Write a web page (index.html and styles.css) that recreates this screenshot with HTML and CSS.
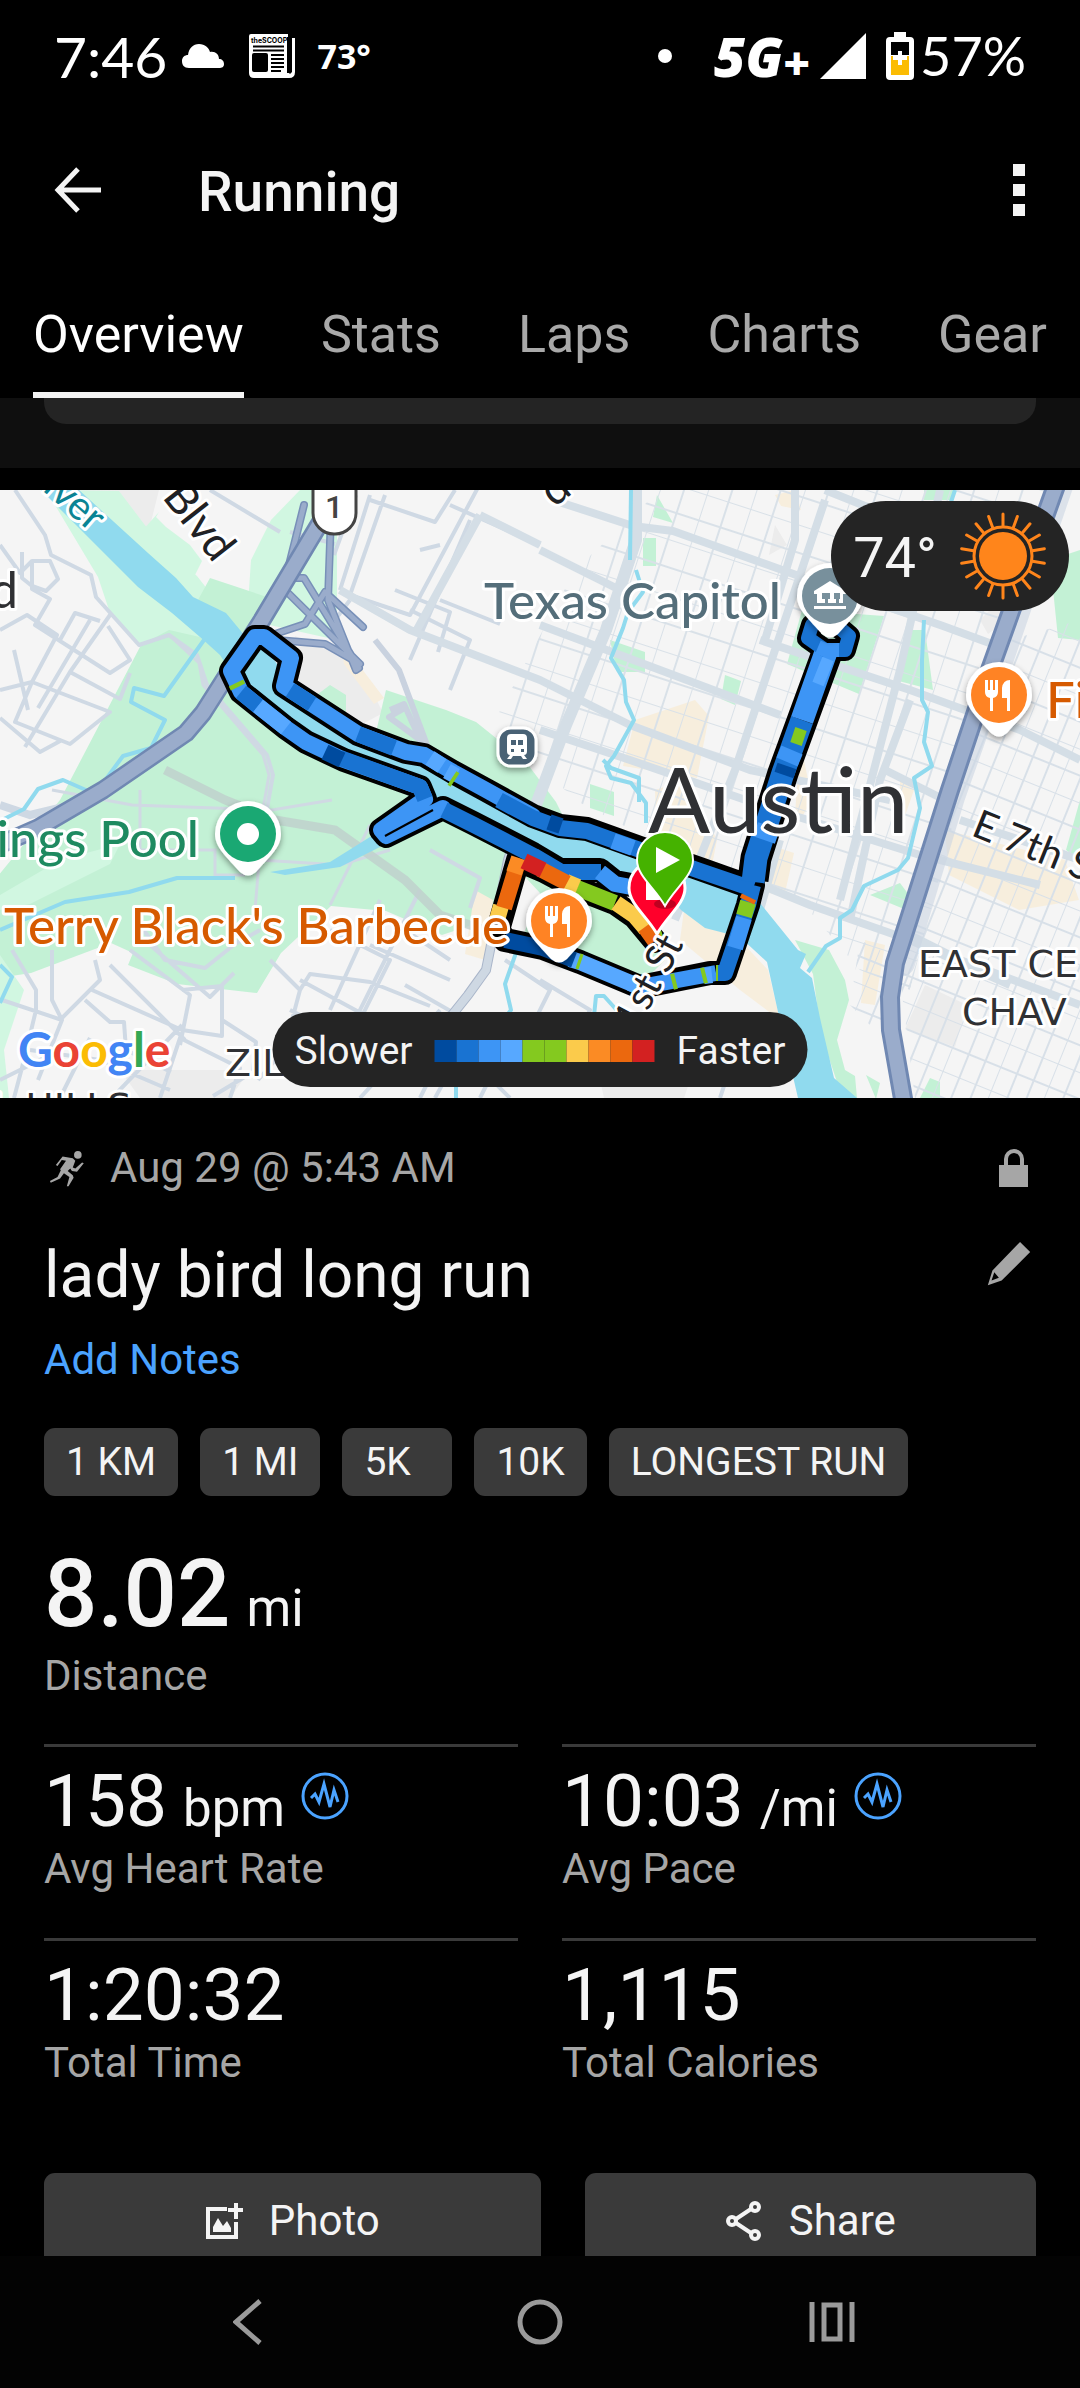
FILE: index.html
```html
<!DOCTYPE html>
<html lang="en">
<head>
<meta charset="utf-8">
<meta name="viewport" content="width=device-width, initial-scale=1">
<title>Running</title>
<link rel="stylesheet" href="styles.css">
</head>
<body>
<div class="status">
  <span class="clock">7:46</span>
  <svg class="cloud" width="44" height="26" viewBox="0 0 44 26"><path fill="#fff" d="M8 25C3 25 1 22 1 18c0-4 3-6 6-6C8 5 12 1 18 1s10 4 11 8c5-1 9 2 9 7 3 0 5 2 5 5s-2 4-5 4z"/></svg>
  <svg class="news" width="46" height="44" viewBox="0 0 46 44">
    <path fill="#fff" d="M2 0h37v38l2 2 2-2V4h3v34q0 6-6 6H5q-5 0-5-5V2q0-2 2-2z"/>
    <text class="news-title" x="2" y="9">theSCOOP</text>
    <path stroke="#000" stroke-width="2" d="M4 12.500h31M4 16.500h31M22 21h13M22 25h13M22 29h13M22 33h13M22 37h10M39 3v36"/>
    <rect x="3" y="19" width="16" height="19" rx="2"/>
  </svg>
  <span class="outside">73°</span>
  <svg class="dot" width="14" height="14" viewBox="0 0 14 14"><circle cx="7" cy="7" r="7" fill="#fff"/></svg>
  <span class="network">5G<span class="plus">+</span></span>
  <svg class="signal" width="46" height="46" viewBox="0 0 46 46"><path fill="#fff" d="M46 0v46H0z"/></svg>
  <svg class="battery" width="28" height="48" viewBox="0 0 28 48"><path fill="#fff" d="M8 0h12v5h4q4 0 4 4v35q0 4-4 4H4q-4 0-4-4V9q0-4 4-4h4z"/><path d="M5 10h18v13H5z"/><path fill="#fbbc04" d="M5 24h18v19H5z"/><path fill="#fff" d="M12 19h4v5h5v4h-5v5h-4v-5H7v-4h5z"/></svg>
  <span class="charge">57%</span>
</div>

<header class="appbar">
  <button class="icon-button" aria-label="Back"><svg width="48" height="46" viewBox="0 0 48 46" fill="none" stroke="#f4f4f4" stroke-width="5"><path d="M24 2 4 23l20 21M4 23h43"/></svg></button>
  <h1 class="heading">Running</h1>
  <button class="icon-button" aria-label="More options"><svg width="14" height="52" viewBox="0 0 14 52" fill="#f4f4f4"><path d="M1 0h12v12H1zM1 20h12v12H1zM1 40h12v12H1z"/></svg></button>
</header>

<nav class="tabs">
  <a class="tab tab-on" href="#overview">Overview</a>
  <a class="tab" href="#stats">Stats</a>
  <a class="tab" href="#laps">Laps</a>
  <a class="tab" href="#charts">Charts</a>
  <a class="tab" href="#gear">Gear</a>
</nav>

<main class="content" id="overview">
  <div class="banner"><div class="banner-card"></div></div>

  <section class="map">
    <svg class="map-art" viewBox="0 490 1080 608" preserveAspectRatio="xMidYMid slice">
      <defs>
        <pattern id="blocks" width="46" height="54" patternUnits="userSpaceOnUse" patternTransform="translate(640 700) rotate(18)"><path d="M0 0v54M23 0v54M0 0h46M0 27h46" fill="none" stroke="#d9e1e8" stroke-width="2"/></pattern>
        <pattern id="blocks-east" width="52" height="50" patternUnits="userSpaceOnUse" patternTransform="translate(940 800) rotate(22)"><path d="M0 0v50M18 0v50M36 0v50M0 0h52M0 25h52" fill="none" stroke="#d8e0e8" stroke-width="2"/></pattern>
        <filter id="lift" x="-30%" y="-30%" width="160%" height="170%"><feDropShadow dx="0" dy="3" stdDeviation="3" flood-opacity=".4"/></filter>
        <path id="pin" d="M-33 0A33 33 0 1 1 33 0C33 14 20 24 8 38Q0 45-8 38C-20 24-33 14-33 0Z"/>
        <path id="drop" d="M-28 0A28 28 0 1 1 28 0C28 16 10 28 0 46C-10 28-28 16-28 0Z"/>
        <path id="food" fill="#fff" d="M-14-15h3v10h2v-10h3v10h2v-10h3v12q0 5-5 6v13h-3V3q-5-1-5-6zM11-15v31H8V3H3V-7q1-8 8-8z"/>
      </defs>
      <rect y="490" width="1080" height="608" fill="#f5f5f5"/>
      <path fill="#ececec" d="M79 490h80l-10 40-17 25-53-56zM295 636l60 25 12 20 16 32-28 15-60-40 6-30z"/>
      <path fill="#d1f7e1" d="M46 490 98 577l12 36 31 34 28-15 58 28 14-28-44-56-40-35-38-50zM159 512l-27 30 38 36 22 3 10-20-12-16-24-18-10-10zM300 490h37v150l-90-20 4-60 20-40z"/>
      <path fill="#c3f1d5" d="M198 600l12-22 60 20-20 40zM141 645l28-15 31 7 27 23 25 40 60 50 110 40-40 45 50-20 30 10 40 20 20 40-20 30-60 20-56-24-55-5-50 47-24 40-80-9-49-19 5-12-22-10-80 30-110 17v-20L60 800zM386 690l60 20 30 12 50 40 30 40 10 20-90-30-100-60zM310 700l20-15 16 10v20zM420 835l60 35-16 12 20 10-20 30-30-30zM500 850l50 20 60 20 20 30 35 40-25 25-120-42 20-50z"/>
      <path fill="#d1f7e1" d="M0 895l60-35 60-16-10 20-80 40-30 6zM0 955l24 35-20 60 5 48H0z"/>
      <path fill="#c3f1d5" d="M802 610l82 6-25 78-72-30zM910 630h15l8 60-38-10zM610 640l35 12v20h-28zM725 675l16 6-6 24-14-6zM643 538h13v28h-13zM657 495l16 28-20-6zM1050 560l30-10v90l-22-2zM924 490h30v10h-30zM590 784l24 8v24l-24-8zM1066 850l14-50v60zM795 940l34 10 16 30 4 20-12 40 8 30 10 6 2 22-16-4-20-60-8-60zM870 895l30-12 12 16-8 10zM866 1075l14 8-4 16zM920 1098l10-20 10 4v16z"/>
      <path fill="#f7eedd" d="M635 720l60-20 14 16-12 62-74-12zM655 790l32-10 30 60-10 50-50-40zM770 845l24 8-10 44-25-7zM945 830l120 30 14 40-60 10-70-35zM865 940l20 5-10 60-14-2zM684 910l56 30 28 30 12 50-40-30-60-50zM340 640l44 58-10 6-30-40zM475 890l18 10-8 60-20-6zM800 740l12 60-18 30zM775 495l20-5 6 20-20-4zM900 780l14 10-14 40z"/>
      <path fill="#ececec" d="M925 985l42 20-12 42-50-18zM775 525l12 20-18 10zM980 620l20-20 8 20-20 14zM120 1070h130l-20 28h-90zM600 1080h90l-6 18h-80z"/>
      <path fill="url(#blocks)" d="M660 490h390l-60 190-80 310-50-20-60-70-130-50-95-50-80-80 80-150z"/>
      <path fill="url(#blocks-east)" d="M1010 640l70-20v478H915l-15-120 20-110zM860 940l30 15-10 80-30-30z"/>
      <g fill="none" stroke="#cfd9e4" stroke-width="4" stroke-linejoin="round">
        <path d="M15 490l30 45 6 20 40 20 5 22 43 48 30-10 28 20 10 30 60 70 6 20-8 45M0 545l20 28 12-12h18l8 18-12 12-14-5-10-8v-26M32 561v28l18 10-15 26 75 48 20-13-22-34M110 615 70 672l50 27 10-26M60 640l15-27 25 8M0 690l32-8 25-47-30-20-27 15M32 682l78 30-40 32-55-22zM0 718l40 34 22-12M70 672l-45 75M14 650l14 60M90 620l-52 88"/>
        <path d="M210 490l70 42M356 495l-22 60M290 532l45 12M340 590l30-95M370 500l65 22 20-32M385 495l-35 100 60 20 80-150M410 610l60 30-20 50M350 600l-15 20M420 550l20-5M450 505l90 40M470 520l-60 140M440 600l60 24M395 590l55 22-12 40"/>
        <path d="M12 950l24 40v20l-12 50-10 38M52 950v50l10 20-24 60M95 960l5 20-40 40M62 1020l-60-20M85 1000l25 22h14l2 28 45 22M110 965l75 75M130 950l60 45-10 50M150 945l60 52 12-12 12-12M182 990l40-4v50l-40-6-90-40M222 1020l34 22-3 30-40 24M182 1025l-70 73M140 925l25 35 40 8 30-24 25-14M270 960l30 30-16 60-26 30M300 990l10-16 60 8 60 24M290 1010l100 50M300 980l70 38M330 930l60 30-50 100M285 1030l80 40M380 900l-50 110M420 890l-80 160M370 945l80 35M390 920l60 40M440 1010l-80 88M405 985l70 40-40 73M30 1050l70 10 70 30M0 1080l60-30M60 1098l30-60M160 1098l20-60 60 30-10 30M430 850l50 28-10 30M500 1035l40 20M505 960l45 30-30 60M540 980l50 30-20 40"/>
        <path d="M420 1098l30-60 60 60M480 1098l20-40M720 1098l10-30"/>
      </g>
      <g fill="none" stroke="#d0d9e3" stroke-width="3"><path d="M169 635l30 28 4 22 60 70 6 20-8 45M52 790l80 15 140 5 60-10M140 790v60h75v25h30M260 860l80 5 50-15M330 905l40-80M260 850l-5 60"/></g>
      <g fill="none" stroke="#d4dee6" stroke-linejoin="round">
        <path stroke-width="12" d="M636 490v50l-30 90-40 95-30 80-22 60"/>
        <path stroke-width="8" d="M553 500l80 26 40 5 140 50 130 45 60 22M340 590l70 40 130 50 90 45 120 45 140 30M480 515l-66 120M480 515l60 30M540 550l80 40M700 860l110 45 100 35 100 45M540 625l240 90M795 490v50l-30 100M825 500l-40 120-50 150-60 150M940 490l-40 180-60 230M1060 560l-60 20M910 700l-30 80-30 140M825 490l100 40M780 840l-20 70M760 640l150 50 110 40 60 30M540 730l90 30 130 45 160 50 120 30M885 770l60 30M960 820l120 40M900 930l60 30 120 45"/>
      </g>
      <path fill="none" stroke="#bfd0cc" stroke-width="9" d="M165 770l60 30 50 20 60 10 70 50 35 35 60 20" opacity=".8"/>
      <path fill="none" stroke="#a9b5c9" stroke-width="10" d="M528 800l-20 60-22 110-18 25-68 85"/><path fill="none" stroke="#ced8e3" stroke-width="8" d="M528 800l-20 60-22 110-18 25-68 85M0 805l30 10 50-12 35-20"/>
      <path fill="none" stroke="#c9d2df" stroke-width="6" stroke-linejoin="round" d="M375 640l24 30 28 75-38-28 14-8M390 710l14-6 18 40"/>
      <g fill="none" stroke="#90daee" stroke-width="4" stroke-linejoin="round">
        <path d="M204 640l-40 56-30-8-3 14 34 18-14 28-28 8-28 38-32-14-25 9-14 20-20 10M0 930l65-28 64-10 48-14h58M0 965l12 12-12 26"/>
        <path d="M631 490l-1 70M636 570l7 22-15 20-5 16-12 30 13 22 2 22 8 18-20 36-8 10 5 12 20 5 15 20v20M924 620l-2 40v40l6 12-4 30 8 24-18 12 6 30-12 50-10 12-34 16-12 24-12 8v20l-14 8-18 26M955 490l-6 18M603 760l8 8 28 10v24M517 950l-12 34 6 26-8 10M594 1016l2-20h8l18 20M456 1098v-14"/>
      </g>
      <path fill="#90daee" d="M41 490H79L148 553 176 578 193 597 226 613 245 636 268 650 282 672 290 690 355 735 410 758 490 790 550 828 640 850 655 885 600 868 550 868 475 822 425 795 340 757 286 728 236 680 220 655 200 637 172 613 138 587ZM675 860l51 27 34 16 38 47 8 4-6 14 12 10 8 40 14 60 23 20v20l-48-2-11-18-20-86-11-50-27-25-35-9-24-18-26-30zM270 872l60-10 40-25 10-2v12l-40 20-55 8z"/>
      <g fill="none" stroke-linejoin="round" stroke-linecap="round">
        <g stroke="#7890b8" stroke-width="8"><path d="M304 505l-20 80-30 60M331 515l-3 85 28 70 3-2-55-90-22 0-30 60M285 590l75 74M275 634l30-10 20-32 38 35M265 639l60 5 35 20"/></g><g stroke="#9aaccb" stroke-width="5"><path d="M304 505l-20 80-30 60M331 515l-3 85 28 70 3-2-55-90-22 0-30 60M285 590l75 74M275 634l30-10 20-32 38 35M265 639l60 5 35 20"/></g>
        <path stroke="#7088b2" stroke-width="19" d="M336 490l-16 33-58 97-59 93-17 20-83 57-65 38-50 22"/><path stroke="#9aaccb" stroke-width="14" d="M336 490l-16 33-58 97-59 93-17 20-83 57-65 38-50 22"/>
        <path stroke="#cbd6e3" stroke-width="26" d="M1062 480 998 667l-46 130-50 166" opacity=".6"/>
        <path stroke="#7088b2" stroke-width="20" d="M1058 480 991 667l-41 123-55 173-5 34 1 33 14 80"/><path stroke="#9aaccb" stroke-width="14" d="M1058 480 991 667l-41 123-55 173-5 34 1 33 14 80"/>
      </g>
      <g fill="none" stroke-linejoin="round">
        <path stroke="#000" stroke-width="24" stroke-linecap="round" d="M231 671l24-34h9l27 21-7 28 74 48 48 18 18 3 29 17 33 18 47 26 27 10 27 3 53 19 60 21 48 17M231 671l10 21 45 36 20 14 38 18 76 27 5 12-44 31 5 6 57-28 30 15 60 31 27 16h40l15 12 32 6M753 885l-5 20-23 68h-15l-70 14-60-25-37-14-38-8-7-10 20-70 26 11 30 16 41 16 20 14 20 24"/>
        <path stroke="#000" stroke-width="31" d="M753 880l3-22 27-85 22-60 22-60"/><path stroke="#000" stroke-width="22" d="M812 625l-4 13 17 12h20l4-14-14-12" stroke-linecap="round"/>
        <path stroke="#3d95f5" stroke-width="16" stroke-linecap="round" d="M231 671l24-34h9l27 21-7 28 74 48 48 18 18 3 29 17 33 18 47 26M231 671l10 21 45 36 20 14 38 18 76 27 5 12-44 31 5 6 57-28"/>
        <path stroke="#1973d2" stroke-width="16" d="M290 690l22 14M358 734l36 14M499 800l34 18 27 10 27 3 53 19 60 21 53 18M241 692l17 14M340 758l80 29 5 12M444 810l30 15 60 31 27 16h40M753 885l-5 20-23 68h-8"/>
        <path stroke="#3d95f5" stroke-width="16" d="M613 841l20 7M600 872l15 12 32 6M744 918l-9 30M716 973l-76 14-10-4"/>
        <path stroke="#000" stroke-width="2" d="M385 836l48-26"/>
        <path stroke="#57a8ff" stroke-width="16" d="M258 706l28 22M430 758l12 8M640 987l-60-25-10-3M704 976l8-1M447 771l9 5"/>
        <path stroke="#004b9f" stroke-width="16" d="M325 752l17 8M549 822l12 4M574 960l-31-12-38-8"/>
        <path stroke="#84c91f" stroke-width="16" d="M236 683l2 4M452 778l3 2M578 961l3 1M672 982l4-1M702 976l4-1M716 973l2 0M748 902l-4 14M577 888l38 15M655 932l6-2"/>
        <path stroke="#fbcb4b" stroke-width="16" d="M566 882l12 5M616 903l19 13 11 13M501 906l-4 14"/>
        <path stroke="#eb680e" stroke-width="16" d="M518 862l-14 46M540 869l27 14M645 927l10 14M749 897l-2 4"/>
        <path stroke="#fb8b24" stroke-width="16" d="M519 858l-5 15"/><path stroke="#d32121" stroke-width="16" d="M524 861l19 9"/>
        <path stroke="#1973d2" stroke-width="23" d="M753 882l3-24 27-85 19-53"/><path stroke="#3d95f5" stroke-width="23" d="M802 720l24-68M764 840l5-14M787 762l5-12"/><path stroke="#57a8ff" stroke-width="12" d="M818 684l10-25"/><path stroke="#84c91f" stroke-width="12" d="M796 744l5-15"/><path stroke="#004b9f" stroke-width="20" d="M784 775l3-9"/>
        <path stroke="#1973d2" stroke-width="14" d="M812 625l-4 13 17 12h20l4-14-14-12" stroke-linecap="round"/><path stroke="#3d95f5" stroke-width="14" d="M818 647l7 3h14"/>
      </g>
      <g class="label">
        <text class="road" x="214" y="564" text-anchor="end" transform="rotate(52 214 564)">Blvd</text>
        <text class="river" x="91" y="533" text-anchor="end" transform="rotate(41 91 533)">iver</text>
        <text class="town" x="18" y="608" text-anchor="end">d</text>
        <text class="road" x="554" y="508" transform="rotate(-38 554 508)">d</text>
        <text class="place capitol" x="484" y="619">Texas Capitol</text>
        <text class="place pool" x="199" y="857" text-anchor="end">ings Pool</text>
        <text class="place food" x="4" y="944">Terry Black's Barbecue</text>
        <text class="place food" x="1046" y="718">Fi</text>
        <text class="city" x="648" y="833">Austin</text>
        <text class="street" x="970" y="835" transform="rotate(22 970 835)">E 7th S</text>
        <text class="street" x="684" y="944" text-anchor="end" transform="rotate(-62 684 944)">1st St</text>
        <text class="district" x="918" y="977">EAST CE</text>
        <text class="district" x="962" y="1025">CHAV</text>
        <text class="district" x="225" y="1076">ZIL</text>
        <text class="district" x="-8" y="1120">L HILLS</text>
        <text class="google" x="18" y="1067"><tspan fill="#4285f4">G</tspan><tspan fill="#ea4335">o</tspan><tspan fill="#fbbc04">o</tspan><tspan fill="#4285f4">g</tspan><tspan fill="#34a853">l</tspan><tspan fill="#ea4335">e</tspan></text>
      </g>
      <rect x="313" y="470" width="43" height="64" rx="21" fill="#fff" stroke="#444" stroke-width="3"/><text class="shield" x="334" y="518" text-anchor="middle">1</text>
      <g transform="translate(517 747)"><rect x="-19" y="-19" width="38" height="38" rx="13" fill="#4a6275" stroke="#fff" stroke-width="3" filter="url(#lift)"/><path fill="#fff" fill-rule="evenodd" d="M-6-13H6q4 0 4 4V4q0 4-3 4l3 4H6L4 9h-8l-2 3h-4l3-4q-3 0-3-4V-9q0-4 4-4zM-6-7v5h5v-5zM1-7v5h5v-5zM-6 2v3h3V2zM4 2v3h3V2z"/></g>
      <g transform="translate(248 834)"><use href="#pin" fill="#fff" filter="url(#lift)"/><circle r="28" fill="#1aa873"/><circle r="11" fill="#fff"/></g>
      <g transform="translate(559 921)"><use href="#pin" fill="#fff" filter="url(#lift)"/><circle r="28" fill="#ff8324"/><use href="#food"/></g>
      <g transform="translate(999 695)"><use href="#pin" fill="#fff" filter="url(#lift)"/><circle r="28" fill="#ff8324"/><use href="#food"/></g>
      <g transform="translate(830 596)"><use href="#pin" fill="#fff" filter="url(#lift)"/><circle r="28" fill="#78909c"/><path fill="#fff" fill-rule="evenodd" d="M-16-5 0-15 16-5v3h-3V7h-26v-9h-3zM-8-3v6h3v4h3v-4h2v-6zM4-3v6h2v4h3v-4h1v-6zM-16 10h32v3h-32z"/></g>
      <g transform="translate(657 888)"><use href="#drop" fill="#ff002b" stroke="#fff" stroke-width="3"/><rect x="-11" y="-8" width="20" height="20" fill="#fff"/></g>
      <ellipse cx="665" cy="904" rx="11" ry="5" opacity=".25"/>
      <g transform="translate(665 860)"><use href="#drop" fill="#45b200" stroke="#fff" stroke-width="2"/><path fill="#fff" d="M-9-13v26L15 0z"/></g>
    </svg>
    <div class="weather">
      <span class="degrees">74°</span>
      <svg width="88" height="88" viewBox="-44 -44 88 88"><circle r="24" fill="#ff851b"/><g fill="none" stroke="#ff851b" stroke-width="3"><circle r="29"/><g stroke-linecap="round"><path id="rays" d="M0-30V-42M0 30V42"/><use href="#rays" transform="rotate(20)"/><use href="#rays" transform="rotate(40)"/><use href="#rays" transform="rotate(60)"/><use href="#rays" transform="rotate(80)"/><use href="#rays" transform="rotate(100)"/><use href="#rays" transform="rotate(120)"/><use href="#rays" transform="rotate(140)"/><use href="#rays" transform="rotate(160)"/></g></g></svg>
    </div>
    <div class="legend">
      <span>Slower</span>
      <span class="scale"><i class="s1"></i><i class="s2"></i><i class="s3"></i><i class="s4"></i><i class="s5"></i><i class="s5"></i><i class="s6"></i><i class="s7"></i><i class="s8"></i><i class="s9"></i></span>
      <span>Faster</span>
    </div>
  </section>

  <section class="details">
    <div class="row meta">
      <svg width="44" height="40" viewBox="-7 -3 52 47" fill="#a6a6a6"><circle cx="33" cy="5" r="4.500"/><path d="M15 7l12 2 3 3-3 8 3 1 8-7 2 1-8 10-6-1-2-3-3 3 6 5 1 3-6 10h-2l3-11-9-6-2-3 7-10-5-1-5 7-2-1zM13 23l4 3-5 7-11 5-1-2 9-5z"/></svg>
      <span class="muted grow">Aug 29 @ 5:43 AM</span>
      <svg width="44" height="38" viewBox="0 0 44 38"><path fill="#a6a6a6" d="M7 16h29v22H7z"/><path fill="none" stroke="#a6a6a6" stroke-width="4" d="M14 17v-7a8 8 0 0 1 16 0v7"/></svg>
    </div>
    <div class="row title-row">
      <h2 class="title grow">lady bird long run</h2>
      <button class="icon-button edit" aria-label="Edit title"><svg width="46" height="48" viewBox="0 0 50 48"><path fill="#a6a6a6" fill-rule="evenodd" d="M37 0 48 11 17 42 2 47 7 31zM9 33 6 42 14 39z"/></svg></button>
    </div>
    <a class="notes" href="#notes">Add Notes</a>
    <div class="badges">
      <span class="badge">1 KM</span><span class="badge">1 MI</span><span class="badge">5K</span><span class="badge">10K</span><span class="badge">LONGEST RUN</span>
    </div>
    <div class="stat stat-main">
      <div class="value">8.02 <span class="unit">mi</span></div>
      <div class="muted">Distance</div>
    </div>
    <div class="stats">
      <div class="stat">
        <div class="value">158 <span class="unit">bpm</span><svg class="pulse" width="48" height="48" viewBox="0 0 48 48" fill="none" stroke="#4ba3ff" stroke-width="3"><circle cx="24" cy="24" r="22"/><path d="M10 26l4-4 4 8 5-18 6 23 4-17 4 12"/></svg></div>
        <div class="muted">Avg Heart Rate</div>
      </div>
      <div class="stat">
        <div class="value">10:03 <span class="unit">/mi</span><svg class="pulse" width="48" height="48" viewBox="0 0 48 48" fill="none" stroke="#4ba3ff" stroke-width="3"><circle cx="24" cy="24" r="22"/><path d="M10 26l4-4 4 8 5-18 6 23 4-17 4 12"/></svg></div>
        <div class="muted">Avg Pace</div>
      </div>
      <div class="stat"><div class="value">1:20:32</div><div class="muted">Total Time</div></div>
      <div class="stat"><div class="value">1,115</div><div class="muted">Total Calories</div></div>
    </div>
    <div class="actions">
      <button class="action action-photo"><svg width="38" height="40" viewBox="0 0 38 40" fill="none" stroke="#f4f4f4" stroke-width="4"><path d="M22 8H3v28h28V21M31 2v16M23 9h15"/><path fill="#f4f4f4" stroke="none" d="M8 31v-5l5-9 5 8 4-5 4 7v4z"/></svg>Photo</button>
      <button class="action"><svg width="38" height="40" viewBox="0 0 38 40" fill="none" stroke="#f4f4f4" stroke-width="4"><circle cx="7" cy="20" r="4"/><circle cx="30" cy="6" r="4"/><circle cx="30" cy="34" r="4"/><path d="M11 18 26 8M11 22l15 10"/></svg>Share</button>
    </div>
  </section>
</main>

<footer class="system">
  <button class="icon-button" aria-label="System back"><svg width="30" height="46" viewBox="0 0 30 46" fill="none" stroke="#9a9a9a" stroke-width="5"><path d="M27 2 3 23l24 21"/></svg></button>
  <button class="icon-button" aria-label="Home"><svg width="46" height="46" viewBox="0 0 46 46" fill="none" stroke="#9a9a9a" stroke-width="5"><circle cx="23" cy="23" r="20"/></svg></button>
  <button class="icon-button" aria-label="Recent apps"><svg width="46" height="42" viewBox="0 0 46 42" fill="none" stroke="#9a9a9a" stroke-width="5"><path d="M3 1v40M43 1v40M15 4h16v34H15z"/></svg></button>
</footer>
</body>
</html>
```
FILE: styles.css
```css
* { box-sizing: border-box; }
body {
  margin: 0;
  height: 100vh;
  display: flex;
  flex-direction: column;
  overflow: hidden;
  background: #000;
  color: #f4f4f4;
  font-family: Roboto, "Liberation Sans", sans-serif;
  font-size: 42px;
  line-height: 52px;
}
h1, h2 { margin: 0; }
svg { flex: none; display: block; }
button { font: inherit; color: inherit; background: none; border: 0; padding: 0; }
.icon-button { display: flex; }
.grow { flex: 1; }
.muted { color: #a6a6a6; }

.status { display: flex; align-items: center; height: 112px; padding: 0 54px; color: #fff; flex: none; }
.clock { font: 400 57px/64px Lato, "Open Sans", sans-serif; }
.charge { font: 400 54px/64px Lato, "Open Sans", sans-serif; }
.cloud { margin-left: 14px; }
.news { margin-left: 24px; }
.news-title { font: 700 7px Inter, sans-serif; }
.outside { margin-left: 22px; font: 700 34px/40px "Liberation Sans Narrow", "Open Sans", sans-serif; }
.dot { margin-left: auto; }
.network { display: flex; align-items: center; margin-left: 42px; font: italic 800 54px/64px "Open Sans", sans-serif; }
.plus { font-size: 46px; line-height: 48px; padding-top: 12px; }
.signal { margin-left: 10px; }
.battery { margin: 0 6px 0 20px; }

.appbar { display: flex; align-items: center; height: 156px; padding: 0 54px; flex: none; }
.heading { flex: 1; margin-left: 96px; padding-top: 4px; font-size: 55px; line-height: 64px; font-weight: 500; }

.tabs { display: flex; justify-content: space-between; height: 130px; padding: 0 33px; flex: none; }
.tab { padding-top: 35px; color: #a9a9a9; font-size: 52px; line-height: 64px; text-decoration: none; }
.tab-on { color: #fff; border-bottom: 6px solid #f4f4f4; }

.content { flex: 1; min-height: 0; overflow: hidden; }
.banner { background: #0f0f0f; padding: 0 44px 44px; margin-bottom: 22px; }
.banner-card { height: 26px; background: #242424; border-radius: 0 0 22px 22px; }

.map { position: relative; }
.map-art { width: 100%; height: auto; }
.label { font-family: Lato, "Open Sans", sans-serif; paint-order: stroke; stroke: #fff; stroke-width: 6px; stroke-linejoin: round; }
.road { font-size: 44px; fill: #202124; }
.river { font-size: 40px; fill: #0b8494; }
.town { font-size: 50px; fill: #303134; }
.place { font-size: 51px; font-weight: 500; }
.capitol { fill: #546e7a; }
.pool { fill: #1e8a60; }
.place.food { fill: #d65a00; }
.city { font-size: 92px; fill: #303134; }
.street { font-size: 40px; fill: #202124; }
.district { font-family: "DejaVu Sans", sans-serif; font-size: 38px; fill: #303134; }
.google { font-size: 48px; font-weight: 700; }
.shield { font: 500 32px Roboto, sans-serif; fill: #444; }

.weather { position: absolute; top: 11px; right: 11px; height: 110px; padding: 0 22px; display: flex; align-items: center; gap: 22px; border-radius: 55px; background: #242424; font-size: 56px; line-height: 64px; }
.degrees { padding-top: 4px; }
.legend { position: absolute; left: 50%; bottom: 11px; transform: translateX(-50%); height: 75px; padding: 2px 22px 0; display: flex; align-items: center; gap: 22px; border-radius: 38px; background: #242424; font-size: 39px; line-height: 44px; }
.scale { display: flex; }
.scale i { width: 22px; height: 22px; }
.s1 { background: #004b9f; } .s2 { background: #1973d2; } .s3 { background: #3d95f5; }
.s4 { background: #57a8ff; } .s5 { background: #84c91f; } .s6 { background: #fbcb4b; }
.s7 { background: #fb8b24; } .s8 { background: #eb680e; } .s9 { background: #d32121; }

.details { padding: 44px 44px 0; }
.row { display: flex; align-items: center; }
.meta { gap: 22px; margin-bottom: 38px; }
.title-row { height: 88px; }
.title { font-size: 64px; line-height: 76px; font-weight: 400; }
.edit { align-self: flex-start; margin: 8px 4px 0 0; }
.notes { display: inline-block; margin-top: 14px; color: #4ba3ff; text-decoration: none; }
.badges { display: flex; gap: 22px; margin-top: 42px; }
.badge { min-width: 110px; height: 68px; padding: 0 22px; border-radius: 11px; background: #3a3a3a; font-size: 39px; line-height: 68px; }
.value { display: flex; align-items: baseline; gap: 16px; font-size: 73px; line-height: 84px; }
.unit { font-size: 51px; line-height: 52px; }
.pulse { align-self: flex-start; margin-top: 13px; }
.stat-main { margin-top: 42px; height: 206px; }
.stat-main .value { font-size: 94px; font-weight: 500; line-height: 112px; }
.stat-main .unit { font-weight: 400; line-height: 52px; }
.stats { display: grid; grid-template-columns: 1fr 1fr; column-gap: 44px; }
.stats .stat { height: 194px; padding-top: 12px; border-top: 3px solid #3a3a3a; }
.actions { display: flex; gap: 44px; margin-top: 41px; }
.action { flex: 10; display: flex; align-items: center; justify-content: center; gap: 26px; height: 96px; border-radius: 11px; background: #3a3a3a; }
.action-photo { flex: 11; }

.system { display: grid; grid-template-columns: 1fr 1fr 1fr; align-items: center; justify-items: center; height: 132px; padding: 0 102px; background: #030303; flex: none; }
```
